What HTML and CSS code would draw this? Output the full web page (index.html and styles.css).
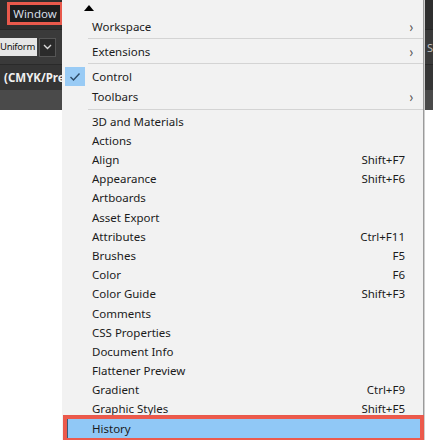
FILE: index.html
```html
<!DOCTYPE html>
<html>
<head>
<meta charset="utf-8">
<link rel="stylesheet" href="styles.css">
</head>
<body>
<div class="page">
  <div class="app">
    <div class="menubar"><span class="win">Window</span></div>
    <div class="ctrlbar">
      <span class="uniform">Uniform</span>
      <span class="dd"><svg width="9" height="6" viewBox="0 0 9 6"><path d="M1 1 L4.5 4.5 L8 1" fill="none" stroke="#d8d8d8" stroke-width="1.4"/></svg></span>
      <span class="spacer"></span>
      <span class="tail">t S</span>
    </div>
    <div class="docbar"><span class="doc">(CMYK/Pre</span></div>
    <div class="bar4"></div>
  </div>

  <div class="menu">
    <div class="uparrow"><svg width="10" height="6" viewBox="0 0 10 6"><path d="M0 6 L5 0 L10 6 Z" fill="#000"/></svg></div>
    <div class="item"><span class="gut"></span><span class="label">Workspace</span><span class="sub">&#8250;</span></div>
    <div class="sep"></div>
    <div class="item"><span class="gut"></span><span class="label">Extensions</span><span class="sub">&#8250;</span></div>
    <div class="sep"></div>
    <div class="item"><span class="gut"><span class="check"><svg width="12" height="10" viewBox="0 0 12 10"><path d="M1.5 5 L4.5 8 L10.5 1.5" fill="none" stroke="#2c4a66" stroke-width="1.4"/></svg></span></span><span class="label">Control</span></div>
    <div class="item tall"><span class="gut"></span><span class="label">Toolbars</span><span class="sub">&#8250;</span></div>
    <div class="sep last"></div>
    <div class="list">
      <div class="item"><span class="gut"></span><span class="label">3D and Materials</span></div>
      <div class="item"><span class="gut"></span><span class="label">Actions</span></div>
      <div class="item"><span class="gut"></span><span class="label">Align</span><span class="key">Shift+F7</span></div>
      <div class="item"><span class="gut"></span><span class="label">Appearance</span><span class="key">Shift+F6</span></div>
      <div class="item"><span class="gut"></span><span class="label">Artboards</span></div>
      <div class="item"><span class="gut"></span><span class="label">Asset Export</span></div>
      <div class="item"><span class="gut"></span><span class="label">Attributes</span><span class="key">Ctrl+F11</span></div>
      <div class="item"><span class="gut"></span><span class="label">Brushes</span><span class="key">F5</span></div>
      <div class="item"><span class="gut"></span><span class="label">Color</span><span class="key">F6</span></div>
      <div class="item"><span class="gut"></span><span class="label">Color Guide</span><span class="key">Shift+F3</span></div>
      <div class="item"><span class="gut"></span><span class="label">Comments</span></div>
      <div class="item"><span class="gut"></span><span class="label">CSS Properties</span></div>
      <div class="item"><span class="gut"></span><span class="label">Document Info</span></div>
      <div class="item"><span class="gut"></span><span class="label">Flattener Preview</span></div>
      <div class="item"><span class="gut"></span><span class="label">Gradient</span><span class="key">Ctrl+F9</span></div>
      <div class="item"><span class="gut"></span><span class="label">Graphic Styles</span><span class="key">Shift+F5</span></div>
      <div class="item hl"><span class="gut"></span><span class="label">History</span></div>
    </div>
  </div>
</div>
</body>
</html>
```

FILE: styles.css
```css
html, body {
  margin: 0;
  padding: 0;
  background: #ffffff;
}
body {
  font-family: "Segoe UI", "Noto Sans", "Open Sans", sans-serif;
  font-size: 11.5px;
  color: #1b1b1b;
}
.page {
  position: relative;
  width: 433px;
  height: 440px;
  overflow: hidden;
}
.app {
  display: flex;
  flex-direction: column;
  width: 433px;
  height: 110px;
  background: #323232;
}
.menubar {
  height: 30px;
  background: #2e2e2e;
  display: flex;
  align-items: flex-start;
  padding: 2px 0 0 7px;
  box-sizing: border-box;
  border-bottom: 1px solid #262626;
}
.win {
  display: inline-block;
  box-sizing: border-box;
  width: 56px;
  height: 23px;
  border: 3px solid #e8594c;
  background: #1d1d1d;
  color: #d4dce4;
  font-size: 11.5px;
  line-height: 17px;
  text-align: center;
}
.ctrlbar {
  height: 34px;
  background: #3a3a3a;
  display: flex;
  align-items: center;
  border-bottom: 1px solid #2a2a2a;
}
.uniform {
  display: inline-block;
  height: 18px;
  width: 37px;
  background: #e6e6e6;
  color: #111;
  font-size: 9.5px;
  line-height: 18px;
  letter-spacing: -0.3px;
  white-space: nowrap;
}
.dd {
  margin-left: 2px;
  width: 15px;
  height: 17px;
  background: #2b2b2b;
  border: 1px solid #555;
  display: flex;
  align-items: center;
  justify-content: center;
}
.spacer { flex: 1; }
.tail {
  color: #bdbdbd;
  font-size: 11px;
  margin-right: 0;
}
.docbar {
  height: 25px;
  background: #353535;
  display: flex;
  align-items: center;
  padding-left: 4px;
}
.doc {
  color: #f0f0f0;
  font-weight: bold;
  font-size: 11.5px;
}
.bar4 {
  flex: 1;
  background: #4a4a4a;
}
.menu {
  position: absolute;
  left: 62px;
  top: 0;
  width: 361px;
  height: 440px;
  background: #f2f2f2;
  box-shadow: 1px 0 0 #9b9b9b, 2px 0 0 #cfcfcf;
  display: flex;
  flex-direction: column;
}
.uparrow {
  height: 17px;
  padding-left: 22px;
  box-sizing: border-box;
  padding-top: 5px;
  display: flex;
  align-items: flex-start;
}
.item {
  height: 19.2px;
  display: flex;
  align-items: center;
  flex-shrink: 0;
}
.item.tall { height: 20px; }
.gut {
  width: 30px;
  height: 100%;
  flex-shrink: 0;
  display: flex;
  align-items: center;
}
.check {
  margin-left: 3px;
  width: 20px;
  height: 19px;
  background: #99cbf5;
  display: flex;
  align-items: center;
  justify-content: center;
}
.label {
  flex: 1;
  white-space: nowrap;
}
.key {
  margin-right: 18px;
  white-space: nowrap;
}
.sub {
  margin-right: 9px;
  font-size: 15px;
  color: #555;
  line-height: 1;
  transform: scaleX(0.8);
}
.sep {
  height: 1px;
  margin: 2px 0 3px 26px;
  background: #d4d4d4;
  flex-shrink: 0;
}
.sep.last {
  margin-bottom: 2px;
}
.list {
  display: flex;
  flex-direction: column;
}
.item.hl {
  background: #90c8f6;
  margin: 0 3px 0 5px;
  box-shadow: inset 1px 0 0 #3b5a78, 0 0 0 3px #ec5a4c, 0 0 0 4px #e8594c;
}
.item.hl .gut { width: 25px; }
```
